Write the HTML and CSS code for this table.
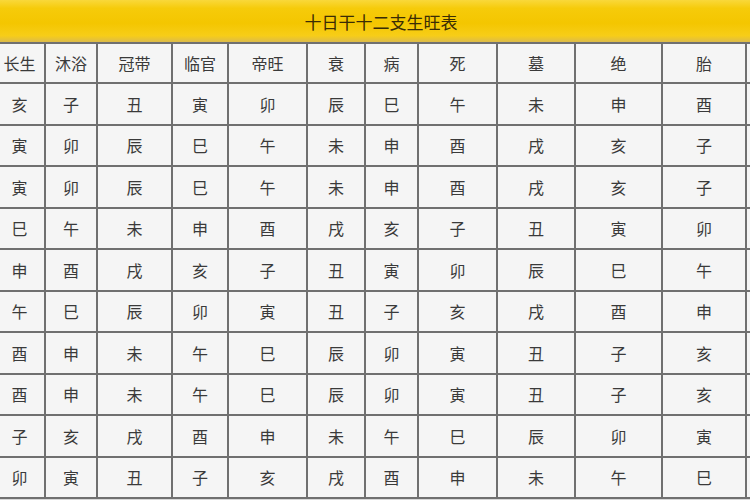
FILE: index.html
```html
<!DOCTYPE html>
<html lang="zh">
<head>
<meta charset="utf-8">
<title>十日干十二支生旺表</title>
<link rel="stylesheet" href="styles.css">
</head>
<body>
<div class="page">
  <div class="title-bar"><span class="title">十日干十二支生旺表</span></div>
  <div class="grid">
    <div class="c">长生</div><div class="c">沐浴</div><div class="c">冠带</div><div class="c">临官</div><div class="c">帝旺</div><div class="c">衰</div><div class="c">病</div><div class="c">死</div><div class="c">墓</div><div class="c">绝</div><div class="c">胎</div><div class="c"></div>
    <div class="c">亥</div><div class="c">子</div><div class="c">丑</div><div class="c">寅</div><div class="c">卯</div><div class="c">辰</div><div class="c">巳</div><div class="c">午</div><div class="c">未</div><div class="c">申</div><div class="c">酉</div><div class="c"></div>
    <div class="c">寅</div><div class="c">卯</div><div class="c">辰</div><div class="c">巳</div><div class="c">午</div><div class="c">未</div><div class="c">申</div><div class="c">酉</div><div class="c">戌</div><div class="c">亥</div><div class="c">子</div><div class="c"></div>
    <div class="c">寅</div><div class="c">卯</div><div class="c">辰</div><div class="c">巳</div><div class="c">午</div><div class="c">未</div><div class="c">申</div><div class="c">酉</div><div class="c">戌</div><div class="c">亥</div><div class="c">子</div><div class="c"></div>
    <div class="c">巳</div><div class="c">午</div><div class="c">未</div><div class="c">申</div><div class="c">酉</div><div class="c">戌</div><div class="c">亥</div><div class="c">子</div><div class="c">丑</div><div class="c">寅</div><div class="c">卯</div><div class="c"></div>
    <div class="c">申</div><div class="c">酉</div><div class="c">戌</div><div class="c">亥</div><div class="c">子</div><div class="c">丑</div><div class="c">寅</div><div class="c">卯</div><div class="c">辰</div><div class="c">巳</div><div class="c">午</div><div class="c"></div>
    <div class="c">午</div><div class="c">巳</div><div class="c">辰</div><div class="c">卯</div><div class="c">寅</div><div class="c">丑</div><div class="c">子</div><div class="c">亥</div><div class="c">戌</div><div class="c">酉</div><div class="c">申</div><div class="c"></div>
    <div class="c">酉</div><div class="c">申</div><div class="c">未</div><div class="c">午</div><div class="c">巳</div><div class="c">辰</div><div class="c">卯</div><div class="c">寅</div><div class="c">丑</div><div class="c">子</div><div class="c">亥</div><div class="c"></div>
    <div class="c">酉</div><div class="c">申</div><div class="c">未</div><div class="c">午</div><div class="c">巳</div><div class="c">辰</div><div class="c">卯</div><div class="c">寅</div><div class="c">丑</div><div class="c">子</div><div class="c">亥</div><div class="c"></div>
    <div class="c">子</div><div class="c">亥</div><div class="c">戌</div><div class="c">酉</div><div class="c">申</div><div class="c">未</div><div class="c">午</div><div class="c">巳</div><div class="c">辰</div><div class="c">卯</div><div class="c">寅</div><div class="c"></div>
    <div class="c">卯</div><div class="c">寅</div><div class="c">丑</div><div class="c">子</div><div class="c">亥</div><div class="c">戌</div><div class="c">酉</div><div class="c">申</div><div class="c">未</div><div class="c">午</div><div class="c">巳</div><div class="c"></div>
  </div>
</div>
</body>
</html>
```
FILE: styles.css
```css
html, body {
  margin: 0;
  padding: 0;
  background: #d8d8d8;
}
.page {
  width: 750px;
  height: 500px;
  overflow: hidden;
  font-family: "Noto Sans CJK SC", "Noto Sans", sans-serif;
}
.title-bar {
  height: 42px;
  display: flex;
  align-items: center;
  justify-content: center;
  padding-left: 12px;
  box-sizing: border-box;
  background: linear-gradient(to bottom, #f9d83a 0%, #f6cb0a 20%, #f4c600 55%, #f7cd18 85%, #dcbb4a 100%);
}
.title {
  font-size: 17px;
  color: #3a2c05;
  letter-spacing: 0px;
}
.grid {
  margin-left: -7px;
  width: 790px;
  padding: 2px;
  box-sizing: border-box;
  display: grid;
  grid-template-columns: 49px 50px 73px 54px 77px 56px 51px 77px 76px 85px 82px 40px;
  grid-template-rows: 38px repeat(10, 39.5px);
  gap: 2px;
  background: #707070;
}
.c {
  background: #f5f5f5;
  color: #3a3a3a;
  font-size: 16px;
  display: flex;
  align-items: center;
  justify-content: center;
}
```
